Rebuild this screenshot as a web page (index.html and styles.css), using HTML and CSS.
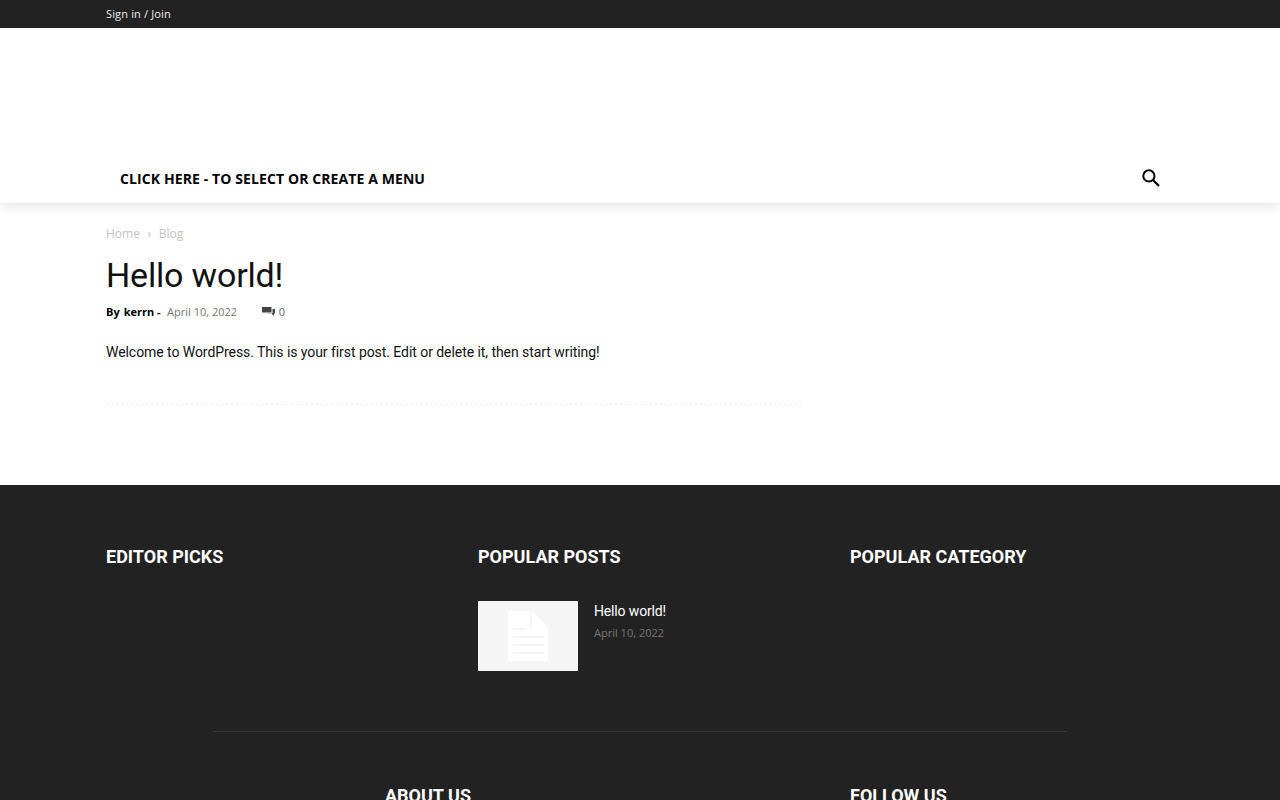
FILE: index.html
```html
<!DOCTYPE html>
<html lang="en">
<head>
    <meta charset="UTF-8">
    <meta name="viewport" content="width=device-width, initial-scale=1.0">
    <title>Hello world!</title>
    <link rel="stylesheet" href="styles.css">
</head>
<body>
    <div class="topBar">
        <div class="wrap"><a class="signIn" href="#">Sign in / Join</a></div>
    </div>

    <header class="siteHeader">
        <div class="wrap menuRow">
            <a class="menuLink" href="#">CLICK HERE - TO SELECT OR CREATE A MENU</a>
            <svg class="searchIcon" viewBox="0 0 20 20" width="20" height="20" aria-label="Search">
                <circle cx="7.9" cy="7.9" r="5.6" fill="none" stroke="#000" stroke-width="2"/>
                <path d="M12 12l6 6" fill="none" stroke="#000" stroke-width="2.2"/>
            </svg>
        </div>
    </header>

    <main class="wrap article">
        <div class="crumbs">
            <a href="#">Home</a>
            <span class="crumbSep">›</span>
            <a href="#">Blog</a>
        </div>
        <h1 class="postTitle">Hello world!</h1>
        <div class="postMeta">
            <span class="by">By</span>
            <span class="author">kerrn -</span>
            <span class="postDate">April 10, 2022</span>
            <span class="comments">
                <svg viewBox="0 0 13 10" width="13" height="10">
                    <path d="M0 1h9.5v5.5H0z" fill="#444"/>
                    <path d="M10.5 3H13v4.5h-1V10L9.5 7.5H5.5V7.2h5z" fill="#444"/>
                </svg>
                0
            </span>
        </div>
        <div class="postBody">
            <p>Welcome to WordPress. This is your first post. Edit or delete it, then start writing!</p>
        </div>
    </main>

    <footer class="siteFooter">
        <div class="wrap footerCols">
            <section>
                <h4 class="blockTitle">EDITOR PICKS</h4>
            </section>
            <section>
                <h4 class="blockTitle">POPULAR POSTS</h4>
                <div class="miniPost">
                    <div class="thumb">
                        <svg viewBox="0 0 40 50" width="40" height="50">
                            <path d="M0 0h22v17h18v33H0z" fill="#fff"/>
                            <path d="M24 0l16 17H24z" fill="#fff"/>
                            <path d="M5 17h12v2H5zM5 25h31v2H5zM5 33h31v2H5zM5 41h31v2H5z" fill="#f5f5f5"/>
                        </svg>
                    </div>
                    <div>
                        <a class="miniTitle" href="#">Hello world!</a>
                        <div class="miniDate">April 10, 2022</div>
                    </div>
                </div>
            </section>
            <section>
                <h4 class="blockTitle">POPULAR CATEGORY</h4>
            </section>
        </div>
        <div class="wrap">
            <div class="footerLine"></div>
            <div class="footerBottom">
                <h4 class="blockTitle">ABOUT US</h4>
                <h4 class="blockTitle">FOLLOW US</h4>
            </div>
        </div>
    </footer>
</body>
</html>
```

FILE: styles.css
```css
body {
    margin: 0;
    background-color: #fff;
    font-family: "Open Sans", Arial, sans-serif;
    color: #111;
}

a {
    color: inherit;
    text-decoration: none;
}

.wrap {
    width: 1068px;
    margin: 0 auto;
}

/* Top bar */
.topBar {
    height: 28px;
    background-color: #222;
}

.signIn {
    display: block;
    font-size: 11px;
    letter-spacing: 0.15px;
    line-height: 27px;
    color: #eee;
}

/* Header */
.siteHeader {
    height: 175px;
    display: flex;
    align-items: flex-end;
    box-shadow: 0 4px 10px rgba(0, 0, 0, 0.1);
    position: relative;
}

.menuRow {
    height: 48px;
    display: flex;
    align-items: center;
    justify-content: space-between;
}

.menuLink {
    padding-left: 14px;
    font-size: 14px;
    font-weight: 700;
    letter-spacing: 0.1px;
    line-height: 48px;
    color: #000;
}

.searchIcon {
    margin-right: 13.5px;
    margin-top: -2px;
}

/* Article */
.article {
    height: 282px;
}

.crumbs {
    padding-top: 22px;
    font-size: 12px;
    line-height: 18px;
    color: #c3c3c3;
}

.crumbSep {
    margin: 0 4.5px;
    font-size: 12px;
}

.postTitle {
    margin: 11px 0 0;
    font-family: Roboto, Arial, sans-serif;
    font-size: 34px;
    font-weight: 400;
    letter-spacing: -0.18px;
    line-height: 42px;
    color: #111;
}

.postMeta {
    display: flex;
    align-items: center;
    margin-top: 5px;
    height: 20px;
    font-size: 11px;
}

.by {
    font-weight: 700;
    color: #000;
    margin-right: 4px;
}

.author {
    font-weight: 700;
    color: #000;
    margin-right: 6.5px;
}

.postDate {
    color: #767676;
}

.comments {
    display: flex;
    align-items: center;
    gap: 4px;
    margin-left: 24.5px;
    color: #666;
}

.postBody {
    width: 696px;
    height: 62px;
    margin-top: 21px;
    border-bottom: 1px dashed #f1f1f1;
    font-family: Roboto, Arial, sans-serif;
    font-size: 14px;
    letter-spacing: -0.06px;
    line-height: 21px;
    color: #111;
}

.postBody p {
    margin: 0;
}

/* Footer */
.siteFooter {
    background-color: #222;
    height: 315px;
    overflow: hidden;
}

.footerCols {
    display: grid;
    grid-template-columns: repeat(3, 324px);
    gap: 48px;
    padding-top: 60px;
    height: 186px;
}

.blockTitle {
    margin: 0;
    font-family: Roboto, Arial, sans-serif;
    font-size: 18px;
    font-weight: 700;
    line-height: 24px;
    color: #fff;
}

.miniPost {
    display: flex;
    gap: 16px;
    margin-top: 32px;
}

.thumb {
    width: 100px;
    height: 70px;
    display: flex;
    align-items: center;
    justify-content: center;
    background-color: #f5f5f5;
}

.miniTitle {
    display: block;
    font-family: Roboto, Arial, sans-serif;
    font-size: 14px;
    letter-spacing: -0.15px;
    line-height: 20px;
    color: #fff;
}

.miniDate {
    margin-top: 2px;
    font-size: 11px;
    line-height: 20px;
    color: #777;
}

.footerLine {
    width: 854px;
    margin: 0 auto;
    border-top: 1px solid #383838;
}

.footerBottom {
    display: grid;
    grid-template-columns: 465px 1fr;
    margin-left: 279px;
    padding-top: 52px;
}
```
